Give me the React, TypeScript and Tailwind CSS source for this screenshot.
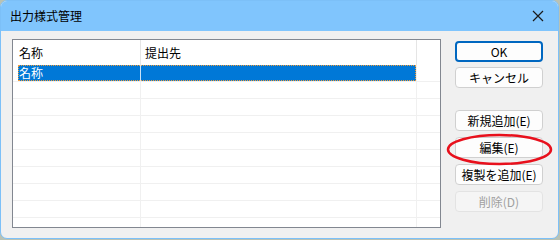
import type { ReactNode } from "react";

const font = { fontFamily: '"Noto Sans CJK JP", "Noto Sans", sans-serif' };

const emptyRows = Array.from({ length: 9 }, (_, i) => i);

function DlgButton({
  children,
  className = "",
  primary = false,
  disabled = false,
}: {
  children: ReactNode;
  className?: string;
  primary?: boolean;
  disabled?: boolean;
}) {
  return (
    <button
      disabled={disabled}
      className={`flex h-[21px] w-[88px] items-center justify-center rounded-[4px] text-[12px] leading-none ${
        primary
          ? "border-2 border-[#0067c0] bg-[#fdfdfd] text-black"
          : disabled
            ? "border border-[#e3e3e3] bg-[#f5f5f5] text-[#a0a0a0]"
            : "border border-[#d0d0d0] bg-[#fdfdfd] text-black"
      } ${className}`}
    >
      {children}
    </button>
  );
}

export default function App() {
  return (
    <div className="h-[240px] w-[560px] overflow-hidden bg-[#b9c2b4]" style={font}>
      <div className="relative flex h-[239px] w-[559px] flex-col overflow-hidden rounded-[7px] border border-[#7cc0f8] bg-[#f0f0f0]">
        {/* title bar */}
        <div className="flex h-[30px] shrink-0 items-center justify-between bg-[#80c5fd] pl-[9px] pr-[10px]">
          <span className="text-[12px] text-black">出力様式管理</span>
          <svg width="12" height="12" viewBox="0 0 12 12" className="mr-[4px]">
            <path d="M1 1 L11 11 M11 1 L1 11" stroke="#1a1a1a" strokeWidth="1.2" />
          </svg>
        </div>

        <div className="flex flex-1 pl-[11px] pt-[8px]">
          {/* list view */}
          <div className="flex h-[189px] w-[429px] flex-col overflow-hidden border border-[#828790] bg-white">
            <div className="flex h-[25px] shrink-0 text-[12px] text-black">
              <div className="flex w-[128px] items-center border-r border-[#e5e5e5] pl-[6px]">名称</div>
              <div className="flex w-[276px] items-center border-r border-[#e5e5e5] pl-[4px]">提出先</div>
              <div className="flex-1" />
            </div>
            <div className="flex h-[17px] shrink-0 border-b border-[#f0f0f0] text-[12px]">
              <div className="w-[5px]" />
              <div className="flex outline-1 -outline-offset-1 outline-dotted outline-[#f29c38]">
                <div className="flex w-[123px] items-center border-r border-[#c9e2f7] bg-[#0078d7] pl-[1px] text-white">
                  名称
                </div>
                <div className="w-[275px] bg-[#0078d7]" />
              </div>
              <div className="border-l border-[#f0f0f0]" />
            </div>
            {emptyRows.map((r) => (
              <div key={r} className="flex h-[17px] shrink-0 border-b border-[#f0f0f0]">
                <div className="w-[128px] border-r border-[#f0f0f0]" />
                <div className="w-[276px] border-r border-[#f0f0f0]" />
              </div>
            ))}
          </div>

          {/* buttons */}
          <div className="ml-[14px] flex flex-col pt-[2px]">
            <DlgButton primary>OK</DlgButton>
            <DlgButton className="mt-[5px]">キャンセル</DlgButton>
            <DlgButton className="mt-[22px]">新規追加(E)</DlgButton>
            <DlgButton className="mt-[6px]">編集(E)</DlgButton>
            <DlgButton className="mt-[6px]">複製を追加(E)</DlgButton>
            <DlgButton className="mt-[6px]" disabled>
              削除(D)
            </DlgButton>
          </div>
        </div>

        {/* red annotation ellipse */}
        <svg
          className="pointer-events-none absolute left-[445px] top-[132px]"
          width="107"
          height="33"
          viewBox="0 0 107 33"
        >
          <ellipse cx="53.5" cy="16.5" rx="51.5" ry="14.5" fill="none" stroke="#e8101c" strokeWidth="2.5" />
        </svg>
      </div>
    </div>
  );
}
